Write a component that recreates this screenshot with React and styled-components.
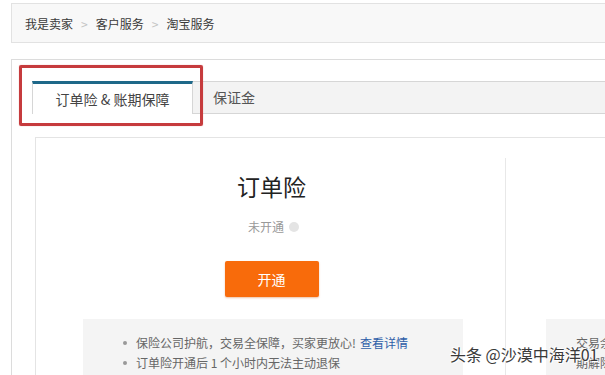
import React from "react";
import styled, { createGlobalStyle } from "styled-components";

const Global = createGlobalStyle`
  html, body { margin: 0; padding: 0; background: #fff; overflow: hidden; }
  body { font-family: "Noto Sans CJK SC", "Noto Sans", "Liberation Sans", sans-serif; }
  * { box-sizing: border-box; }
`;

const Page = styled.div`
  position: relative;
  width: 605px;
  height: 375px;
  overflow: hidden;
  padding: 3px 0 0 11px;
`;

const Breadcrumb = styled.div`
  display: flex;
  align-items: center;
  height: 40px;
  width: 620px;
  padding-left: 13px;
  background: #f8f8f8;
  border: 1px solid #e2e2e2;
  font-size: 12px;
  color: #3a3a3a;
`;

const Crumb = styled.span`
  white-space: nowrap;
`;

const Sep = styled.span`
  color: #c4c4c4;
  margin: 0 8px 0 8px;
  font-size: 12px;
`;

const Main = styled.div`
  margin-top: 16px;
  width: 620px;
  border-top: 1px solid #dcdcdc;
  border-left: 1px solid #dcdcdc;
  padding: 21px 0 0 20px;
  height: 320px;
`;

const TabBar = styled.div`
  display: flex;
  height: 33px;
  background: #f3f3f3;
  border-top: 1px solid #d6d6d6;
  border-bottom: 1px solid #d6d6d6;
`;

const Tab = styled.div`
  display: flex;
  align-items: center;
  justify-content: center;
  height: ${(p) => (p.$active ? "33px" : "31px")};
  margin-top: -1px;
  font-size: 14px;
  white-space: nowrap;
  color: ${(p) => (p.$active ? "#444" : "#555")};
  background: ${(p) => (p.$active ? "#fff" : "transparent")};
  width: ${(p) => (p.$active ? "161px" : "auto")};
  padding: ${(p) => (p.$active ? "0" : "0 0 0 20px")};
  border-top: ${(p) => (p.$active ? "3px solid #1e6889" : "1px solid transparent")};
  border-left: ${(p) => (p.$active ? "1px solid #d6d6d6" : "none")};
  border-right: ${(p) => (p.$active ? "1px solid #d6d6d6" : "none")};
`;

const Panel = styled.div`
  display: flex;
  margin: 23px 0 0 3px;
  border-top: 1px solid #e4e4e4;
  border-left: 1px solid #e4e4e4;
  padding-top: 20px;
`;

const Card = styled.div`
  flex: none;
  width: ${(p) => p.$w}px;
  height: 220px;
  display: flex;
  flex-direction: column;
  align-items: ${(p) => (p.$center ? "center" : "stretch")};
  border-right: ${(p) => (p.$divider ? "1px solid #e8e8e8" : "none")};
  padding-top: ${(p) => p.$pt}px;
  & > * { flex-shrink: 0; }
`;

const Title = styled.div`
  font-size: 23px;
  line-height: 30px;
  color: #222;
  margin-left: 2px;
`;

const Status = styled.div`
  display: flex;
  align-items: center;
  gap: 5px;
  margin-top: 18px;
  font-size: 12px;
  line-height: 16px;
  color: #999;
  margin-left: 6px;
`;

const Dot = styled.span`
  width: 10px;
  height: 10px;
  border-radius: 50%;
  background: #e4e4e4;
`;

const OpenButton = styled.button`
  margin: 26px 0 0 2px;
  width: 94px;
  height: 36px;
  padding: 0;
  border: none;
  border-radius: 2px;
  background: #f86b0b;
  color: #fff;
  font-family: inherit;
  font-size: 14px;
  box-shadow: 0 1px 2px rgba(200, 80, 0, 0.35);
`;

const InfoBox = styled.ul`
  list-style: none;
  align-self: stretch;
  margin: ${(p) => p.$mt}px ${(p) => p.$mr}px 0 ${(p) => p.$ml}px;
  padding: 14px 0 20px ${(p) => p.$pl}px;
  background: #f4f4f4;
  flex: 1 0 auto;
`;

const Item = styled.li`
  position: relative;
  font-size: 12px;
  line-height: 20px;
  color: #666;
  white-space: nowrap;
  &::before {
    content: ${(p) => (p.$bullet ? '""' : "none")};
    position: absolute;
    left: -13px;
    top: 8px;
    width: 4px;
    height: 4px;
    border-radius: 50%;
    background: #999;
  }
`;

const Link = styled.a`
  color: #2e5ea8;
  text-decoration: none;
  margin-left: 4px;
`;

const Highlight = styled.div`
  position: absolute;
  left: 19px;
  top: 65px;
  width: 184px;
  height: 61px;
  border: 3px solid #c63b3d;
  border-radius: 2px;
  box-shadow: 0 0 1px rgba(198, 59, 61, 0.6);
  pointer-events: none;
`;

const Watermark = styled.div`
  position: absolute;
  left: 450px;
  top: 344px;
  font-size: 16px;
  line-height: 20px;
  color: #3a3a3a;
  white-space: nowrap;
  text-shadow: 0 0 2px #fff, 0 0 2px #fff, 1px 1px 0 #fff, -1px -1px 0 #fff;
`;

export default function App() {
  return (
    <>
      <Global />
      <Page>
        <Breadcrumb>
          <Crumb>我是卖家</Crumb>
          <Sep>&gt;</Sep>
          <Crumb>客户服务</Crumb>
          <Sep>&gt;</Sep>
          <Crumb>淘宝服务</Crumb>
        </Breadcrumb>
        <Main>
          <TabBar>
            <Tab $active>订单险 &amp; 账期保障</Tab>
            <Tab>保证金</Tab>
          </TabBar>
          <Panel>
            <Card $w={470} $pt={13} $center $divider>
              <Title>订单险</Title>
              <Status>
                未开通 <Dot />
              </Status>
              <OpenButton>开通</OpenButton>
              <InfoBox $mt={22} $ml={47} $mr={42} $pl={53}>
                <Item $bullet>
                  保险公司护航，交易全保障，买家更放心!<Link href="#">查看详情</Link>
                </Item>
                <Item $bullet>订单险开通后 1 个小时内无法主动退保</Item>
              </InfoBox>
            </Card>
            <Card $w={200} $pt={13}>
              <InfoBox $mt={148} $ml={40} $mr={0} $pl={30}>
                <Item>交易余额保障</Item>
                <Item>期解除</Item>
              </InfoBox>
            </Card>
          </Panel>
        </Main>
        <Highlight />
        <Watermark>头条 @沙漠中海洋01</Watermark>
      </Page>
    </>
  );
}
